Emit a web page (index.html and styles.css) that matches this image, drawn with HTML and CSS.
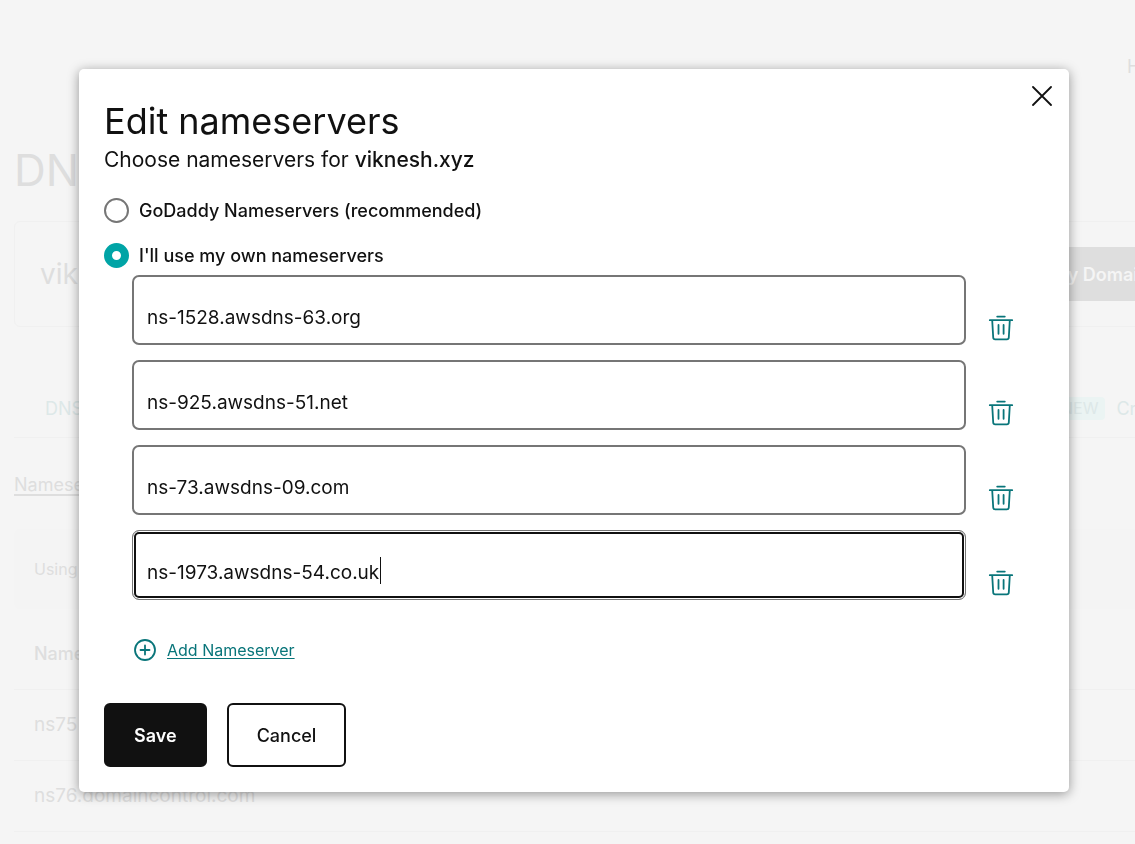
FILE: index.html
```html
<!DOCTYPE html>
<html lang="en">
<head>
<meta charset="utf-8">
<title>Edit nameservers</title>
<link rel="stylesheet" href="styles.css">
</head>
<body>
<svg class="sprite" aria-hidden="true">
  <symbol id="trash" viewBox="0 0 26 26">
    <path d="M9.2 1.6h7.6M1.8 5.2h22.4M4.2 5.2l1 17.3a2 2 0 0 0 2 1.9h11.6a2 2 0 0 0 2-1.9l1-17.3M10.5 10v8.8M15.6 10v8.8"/>
  </symbol>
</svg>

<main class="page">
  <div class="topbar"><a class="help" href="#">Help</a></div>
  <h1 class="page-title">DNS</h1>
  <section class="domain-card">
    <span class="domain-name">vikn</span>
    <button class="buy" type="button">Buy Domain</button>
  </section>
  <nav class="tabs">
    <a class="tab" href="#">DNS</a>
    <a class="tab tab-new" href="#"><span class="badge">NEW</span>Crypto</a>
  </nav>
  <a class="section-link" href="#">Nameservers</a>
  <p class="notice">Using</p>
  <table class="records">
    <thead><tr><th>Name</th></tr></thead>
    <tbody>
      <tr><td>ns75</td></tr>
      <tr><td>ns76.domaincontrol.com</td></tr>
    </tbody>
  </table>
</main>

<div class="overlay">
  <form class="modal" role="dialog" aria-labelledby="title">
    <button class="close" type="button" aria-label="Close">
      <svg viewBox="0 0 20 20"><path d="M1 1l18 18M19 1L1 19"/></svg>
    </button>
    <h2 class="title" id="title">Edit nameservers</h2>
    <p class="subtitle">Choose nameservers for <strong>viknesh.xyz</strong></p>

    <div class="choices">
      <label class="choice"><input type="radio" name="ns">GoDaddy Nameservers (recommended)</label>
      <label class="choice"><input type="radio" name="ns" checked>I'll use my own nameservers</label>
    </div>

    <div class="servers">
      <div class="server">
        <input class="field" type="text" value="ns-1528.awsdns-63.org" aria-label="Nameserver 1">
        <button class="remove" type="button" aria-label="Remove nameserver 1"><svg><use href="#trash"/></svg></button>
      </div>
      <div class="server">
        <input class="field" type="text" value="ns-925.awsdns-51.net" aria-label="Nameserver 2">
        <button class="remove" type="button" aria-label="Remove nameserver 2"><svg><use href="#trash"/></svg></button>
      </div>
      <div class="server">
        <input class="field" type="text" value="ns-73.awsdns-09.com" aria-label="Nameserver 3">
        <button class="remove" type="button" aria-label="Remove nameserver 3"><svg><use href="#trash"/></svg></button>
      </div>
      <div class="server">
        <input class="field field-active" type="text" value="ns-1973.awsdns-54.co.uk" aria-label="Nameserver 4">
        <span class="caret"></span>
        <button class="remove" type="button" aria-label="Remove nameserver 4"><svg><use href="#trash"/></svg></button>
      </div>
    </div>

    <a class="add" href="#">
      <svg viewBox="0 0 22 22"><circle cx="11" cy="11" r="10"/><path d="M11 6.5v9M6.5 11h9"/></svg>
      <span>Add Nameserver</span>
    </a>

    <div class="actions">
      <button class="btn btn-primary" type="submit">Save</button>
      <button class="btn" type="button">Cancel</button>
    </div>
  </form>
</div>
</body>
</html>
```
FILE: styles.css
```css
* { box-sizing: border-box; }

body {
  margin: 0;
  min-height: 100vh;
  overflow: hidden;
  background: #f5f5f5;
  color: #111;
  font-family: Inter, "Liberation Sans", sans-serif;
  font-size: 18px;
}

button, input { font: inherit; }
h1, h2, p { margin: 0; font-weight: 400; }

.sprite { display: none; }

/* Faded page behind the dialog */
.page {
  margin-right: -40px;
  padding: 56px 0 0 14px;
  color: #dedede;
}
.page a { color: inherit; }

.topbar {
  display: flex;
  justify-content: flex-end;
  line-height: 22px;
}
.page .help {
  width: 48px;
  text-decoration: none;
}

.page-title {
  margin-top: 67px;
  font-size: 44px;
  line-height: 50px;
}

.domain-card {
  display: flex;
  align-items: center;
  justify-content: space-between;
  height: 106px;
  margin-top: 26px;
  padding: 0 25px;
  border: 1px solid #f0f0f0;
  border-radius: 6px;
}
.domain-name { font-size: 28px; }
.buy {
  height: 54px;
  padding: 0 0 0 8px;
  border: 0;
  background: #dedede;
  color: #f5f5f5;
  font-weight: 600;
}

.tabs {
  display: flex;
  align-items: center;
  justify-content: space-between;
  height: 59px;
  margin-top: 52px;
  padding-left: 31px;
  border-bottom: 1px solid #f0f0f0;
  color: #dde8e8;
}
.tab { text-decoration: none; }
.tab-new {
  display: flex;
  align-items: center;
  gap: 11px;
  width: 121px;
}
.badge {
  padding: 0 7px;
  border-radius: 4px;
  background: #ebf4f3;
  font-size: 16px;
  line-height: 23px;
}

.section-link {
  display: inline-block;
  margin-top: 35px;
  line-height: 24px;
  text-underline-offset: 3px;
  text-decoration-thickness: 2px;
}

.notice {
  margin-top: 32px;
  padding: 0 20px;
  border-radius: 6px;
  background: #f4f4f4;
  font-size: 16px;
  line-height: 80px;
}

.records {
  width: 100%;
  margin-top: 9px;
  border-collapse: collapse;
}
.records th, .records td {
  height: 71px;
  padding: 0 20px;
  border-bottom: 1px solid #f0f0f0;
  text-align: left;
}
.records th { font-weight: 500; }
.records td { font-size: 19px; }

/* Dialog */
.overlay {
  position: fixed;
  inset: 0;
  padding: 69px 66px 0 79px;
}

.modal {
  position: relative;
  padding: 25px;
  border-radius: 5px;
  background: #fff;
  box-shadow: 0 2px 12px rgba(0, 0, 0, 0.4);
}

.close {
  position: absolute;
  top: 17px;
  right: 17px;
  width: 20px;
  height: 20px;
  padding: 0;
  border: 0;
  background: none;
  color: #111;
}

svg {
  display: block;
  fill: none;
  stroke: currentColor;
  stroke-width: 1.8;
  stroke-linecap: round;
}
.close svg { width: 20px; height: 20px; }

.title {
  padding-top: 5px;
  font-size: 36px;
  line-height: 44px;
}
.subtitle {
  margin-bottom: 13px;
  font-size: 21px;
  line-height: 34px;
}
.subtitle strong { font-weight: 500; }

.choices {
  display: grid;
  gap: 5px;
}
.choice {
  display: flex;
  align-items: center;
  gap: 10px;
  height: 40px;
  font-weight: 500;
}
.choice input {
  appearance: none;
  width: 25px;
  height: 25px;
  margin: 0;
  border: 2px solid #767676;
  border-radius: 50%;
}
.choice input:checked { border: 8px solid #00a4a6; }

.servers {
  display: grid;
  gap: 15px;
  padding: 0 28px;
}
.server {
  position: relative;
  display: flex;
  align-items: flex-end;
  gap: 20px;
}
.field {
  flex: 1;
  min-width: 0;
  height: 70px;
  padding: 14px 13px 0;
  border: 2px solid #767676;
  border-radius: 7px;
  background: #fff;
  color: #111;
  font-size: 19px;
  outline: 0;
}
.field-active {
  border-width: 1px;
  padding: 14px 14px 0;
  box-shadow: inset 0 0 0 1px #fff, inset 0 0 0 3px #111;
}
.caret {
  position: absolute;
  left: 248px;
  top: 27px;
  width: 1px;
  height: 27px;
  background: #111;
}
.remove {
  width: 30px;
  height: 34px;
  padding: 2px;
  border: 0;
  background: none;
  color: #09757a;
}
.remove svg { width: 26px; height: 26px; }

.add {
  display: inline-flex;
  align-items: center;
  gap: 11px;
  margin: 39px 0 42px 30px;
  color: #09757a;
  font-size: 16px;
  line-height: 22px;
  text-underline-offset: 2px;
}
.add svg { width: 22px; height: 22px; }

.actions { display: flex; gap: 20px; }
.btn {
  height: 64px;
  padding: 0 28px;
  border: 2px solid #111;
  border-radius: 6px;
  background: #fff;
  color: #111;
  font-weight: 500;
}
.btn-primary {
  background: #111;
  color: #fff;
  font-weight: 600;
}
```
